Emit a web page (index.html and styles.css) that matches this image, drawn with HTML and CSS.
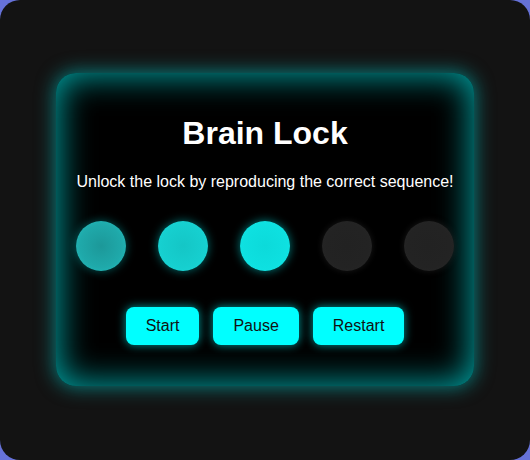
FILE: index.html
```html
<!DOCTYPE html>
<html>
<head>
<meta charset="utf-8">
<link rel="stylesheet" href="styles.css">
</head>
<body>
<div class="frame">
  <div class="card">
    <h1 class="title">Brain Lock</h1>
    <p class="subtitle">Unlock the lock by reproducing the correct sequence!</p>
    <div class="lights">
      <div class="light l1"></div>
      <div class="light l2"></div>
      <div class="light l3"></div>
      <div class="light off"></div>
      <div class="light off"></div>
    </div>
    <div class="controls">
      <button class="btn">Start</button>
      <button class="btn">Pause</button>
      <button class="btn">Restart</button>
    </div>
  </div>
</div>
</body>
</html>
```

FILE: styles.css
```css
html, body {
  margin: 0;
  padding: 0;
  width: 530px;
  height: 460px;
  background: #6672d8;
  overflow: hidden;
}
.frame {
  width: 530px;
  height: 460px;
  box-sizing: border-box;
  background: #131313;
  border-radius: 20px;
  padding-top: 73px;
  padding-left: 56px;
  font-family: "Liberation Sans", Arial, sans-serif;
}
.card {
  width: 418px;
  height: 313px;
  box-sizing: border-box;
  background: #000;
  border-radius: 20px;
  padding: 42px 20px 0;
  box-shadow: 0 0 18px 2px rgba(0, 200, 200, 0.55), inset 0 0 32px 4px rgba(0, 220, 220, 0.7);
  text-align: center;
}
.title {
  margin: 0;
  font-size: 32px;
  line-height: 37px;
  font-weight: bold;
  color: #fff;
}
.subtitle {
  margin: 21px 0 0;
  font-size: 16px;
  line-height: 18px;
  color: #fff;
}
.lights {
  display: flex;
  gap: 32px;
  margin-top: 30px;
}
.light {
  width: 50px;
  height: 50px;
  border-radius: 50%;
}
.l1 {
  background: radial-gradient(circle, #1c9899 0%, #1fa9aa 60%, #22c4c4 100%);
  box-shadow: 0 0 10px rgba(0, 200, 200, 0.45);
}
.l2 {
  background: radial-gradient(circle, #14c6c6 0%, #16cfcf 60%, #1ad9d9 100%);
  box-shadow: 0 0 10px rgba(0, 220, 220, 0.5);
}
.l3 {
  background: radial-gradient(circle, #0cdada 0%, #0ee0e0 60%, #12e8e8 100%);
  box-shadow: 0 0 10px rgba(0, 230, 230, 0.55);
}
.off {
  background: radial-gradient(circle, #222 0%, #232323 60%, #272727 100%);
  box-shadow: 0 0 6px rgba(40, 40, 40, 0.6);
}
.controls {
  display: flex;
  justify-content: center;
  gap: 14px;
  margin-top: 36px;
}
.btn {
  height: 38px;
  padding: 0 20px;
  border: none;
  border-radius: 8px;
  background: #00ffff;
  color: #111;
  font-family: "Liberation Sans", Arial, sans-serif;
  font-size: 16px;
  box-shadow: 0 0 10px rgba(0, 255, 255, 0.6);
}
```
